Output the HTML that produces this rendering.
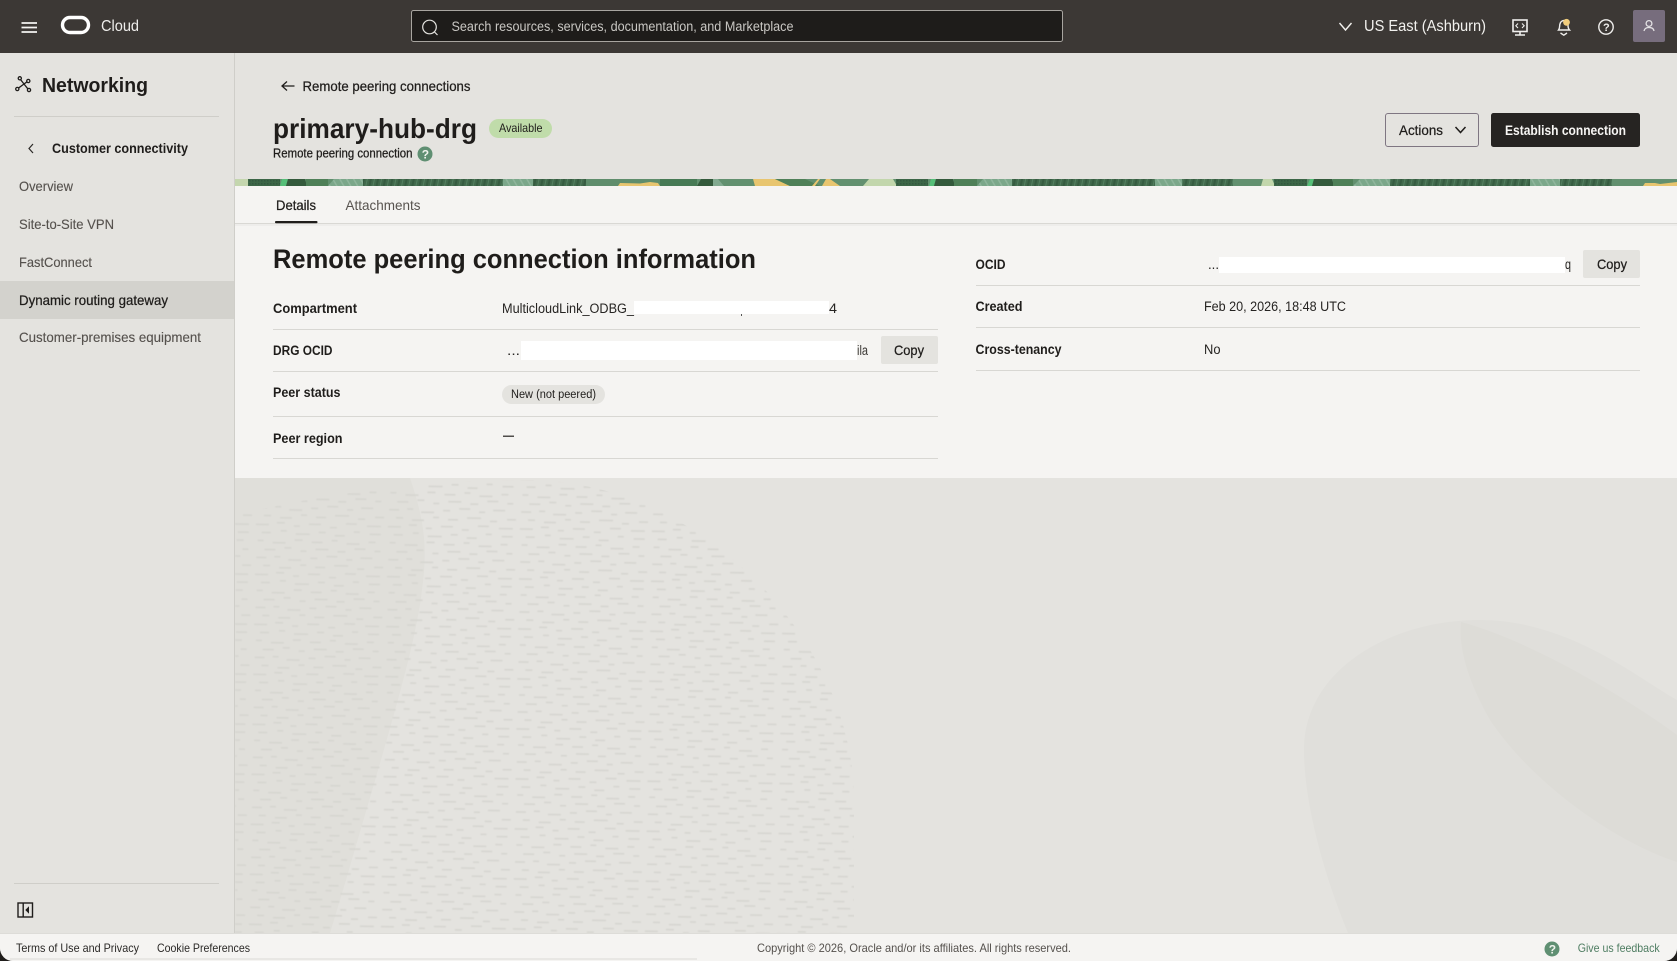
<!DOCTYPE html>
<html lang="en">
<head>
<meta charset="utf-8">
<title>primary-hub-drg</title>
<style>
html,body{margin:0;padding:0;width:1677px;height:961px;overflow:hidden;background:#e4e3df}
svg{display:block}
text{font-family:"Liberation Sans",sans-serif;font-size:14px;fill:#1f1d1b}
.b{font-weight:700}
.m{stroke:#1f1d1b;stroke-width:.25}
.nav{fill:#55514d;stroke:#55514d;stroke-width:.12}
.lab{font-weight:700;font-size:13.5px}
.val{font-size:13.5px;fill:#262422}
.ft{font-size:12px;fill:#2b2927}
</style>
</head>
<body>
<svg width="1677" height="961" viewBox="0 0 1677 961" xmlns="http://www.w3.org/2000/svg">
<defs>
<pattern id="dash" width="132" height="50" patternUnits="userSpaceOnUse" patternTransform="rotate(1)">
<g fill="#d6d5d0">
<rect x="2" y="2" width="10" height="1.6"/><rect x="20" y="1" width="6" height="1.6"/><rect x="34" y="4" width="13" height="1.6"/><rect x="56" y="2" width="7" height="1.6"/><rect x="72" y="0" width="11" height="1.6"/><rect x="92" y="3" width="6" height="1.6"/><rect x="106" y="1" width="12" height="1.6"/>
<rect x="9" y="10" width="7" height="1.6"/><rect x="25" y="12" width="12" height="1.6"/><rect x="46" y="9" width="6" height="1.6"/><rect x="61" y="11" width="10" height="1.6"/><rect x="80" y="9" width="14" height="1.6"/><rect x="103" y="12" width="7" height="1.6"/><rect x="120" y="10" width="9" height="1.6"/>
<rect x="1" y="19" width="13" height="1.6"/><rect x="22" y="17" width="8" height="1.6"/><rect x="39" y="20" width="6" height="1.6"/><rect x="54" y="18" width="12" height="1.6"/><rect x="75" y="21" width="7" height="1.6"/><rect x="91" y="17" width="11" height="1.6"/><rect x="112" y="19" width="14" height="1.6"/>
<rect x="7" y="27" width="9" height="1.6"/><rect x="26" y="25" width="6" height="1.6"/><rect x="41" y="28" width="14" height="1.6"/><rect x="64" y="26" width="7" height="1.6"/><rect x="80" y="29" width="10" height="1.6"/><rect x="99" y="25" width="6" height="1.6"/><rect x="115" y="27" width="11" height="1.6"/>
<rect x="3" y="35" width="6" height="1.6"/><rect x="18" y="37" width="13" height="1.6"/><rect x="40" y="34" width="8" height="1.6"/><rect x="57" y="36" width="11" height="1.6"/><rect x="77" y="34" width="6" height="1.6"/><rect x="92" y="37" width="13" height="1.6"/><rect x="114" y="35" width="7" height="1.6"/>
<rect x="10" y="44" width="11" height="1.6"/><rect x="30" y="42" width="7" height="1.6"/><rect x="46" y="45" width="6" height="1.6"/><rect x="61" y="43" width="13" height="1.6"/><rect x="83" y="45" width="8" height="1.6"/><rect x="100" y="42" width="11" height="1.6"/><rect x="120" y="44" width="6" height="1.6"/>
</g>
</pattern>
<pattern id="fp" width="7" height="7" patternUnits="userSpaceOnUse" patternTransform="rotate(12)">
<rect width="7" height="7" fill="#41694c"/>
<rect x="0" width="2" height="7" fill="#365c41"/>
<rect x="4" width="1" height="7" fill="#537f60"/>
</pattern>
<pattern id="hatch" width="3" height="3" patternUnits="userSpaceOnUse">
<rect width="3" height="3" fill="#3c6647"/>
<rect width="1.5" height="1.5" fill="#335840"/>
</pattern>
<pattern id="lfp" width="6" height="7" patternUnits="userSpaceOnUse" patternTransform="rotate(-30)">
<rect width="6" height="7" fill="#7ba78a"/>
<rect width="1.5" height="7" fill="#8fb59c"/>
</pattern>
<clipPath id="dots"><path d="M235,516 C300,497 420,480 528,480 C700,480 854,640 854,800 L854,933 L235,933Z"/></clipPath>
<filter id="soft" x="0" y="0" width="100%" height="100%"><feGaussianBlur stdDeviation="0.5"/></filter>
</defs>

<!-- page background -->
<rect width="1677" height="961" fill="#e4e3df"/>

<!-- decorative background -->
<path d="M235,478 H410 C424,520 428,545 422,590 C415,650 385,745 346,880 L330,933 H235Z" fill="#e0dfda"/>
<g clip-path="url(#dots)"><rect x="235" y="478" width="640" height="455" fill="url(#dash)" filter="url(#soft)"/></g>
<path d="M1348,933 C1322,870 1304,800 1304,750 C1304,670 1390,620 1480,620 C1570,620 1640,680 1677,700 V933Z" fill="#e0dfdb"/>
<path d="M1461,622 C1530,640 1630,700 1677,735 V862 C1610,840 1530,780 1490,720 C1470,685 1458,650 1461,622Z" fill="#dddcd7"/>

<!-- sidebar -->
<rect x="0" y="53" width="234" height="880" fill="#e4e3df"/>
<rect x="234" y="53" width="1" height="880" fill="#cfcec9"/>
<g fill="none" stroke="#1f1d1b" stroke-width="1.3">
<path d="M20.5,79.5 L24,84 L27,81.8 M24,84 L18.3,88.2 M24,84 L27.8,88.8"/>
<circle cx="19.8" cy="78.3" r="1.6"/><circle cx="28.3" cy="81" r="1.6"/><circle cx="17.3" cy="89" r="1.6"/><circle cx="29" cy="90" r="1.6"/>
</g>
<text x="42" y="92" class="b" font-size="20" style="font-size:20px" textLength="106" lengthAdjust="spacingAndGlyphs">Networking</text>
<rect x="14" y="116" width="205" height="1" fill="#cfcec9"/>
<path d="M33,144 L29,148.5 L33,153" fill="none" stroke="#2b2927" stroke-width="1.2"/>
<text x="52" y="153" class="b" textLength="136" lengthAdjust="spacingAndGlyphs">Customer connectivity</text>
<text x="19" y="191" class="nav" textLength="54" lengthAdjust="spacingAndGlyphs">Overview</text>
<text x="19" y="229" class="nav" textLength="95" lengthAdjust="spacingAndGlyphs">Site-to-Site VPN</text>
<text x="19" y="267" class="nav" textLength="73" lengthAdjust="spacingAndGlyphs">FastConnect</text>
<rect x="0" y="281" width="234" height="38" fill="#d3d2cd"/>
<text x="19" y="305" class="m" textLength="149" lengthAdjust="spacingAndGlyphs">Dynamic routing gateway</text>
<text x="19" y="342" class="nav" textLength="182" lengthAdjust="spacingAndGlyphs">Customer-premises equipment</text>
<rect x="14" y="883" width="205" height="1" fill="#cfcec9"/>
<rect x="18" y="903" width="14.5" height="14" fill="none" stroke="#1f1d1b" stroke-width="1.4"/>
<rect x="22.5" y="903" width="1.4" height="14" fill="#1f1d1b"/>
<path d="M28.5,907.5 L26,910 L28.5,912.5Z" fill="#1f1d1b" stroke="#1f1d1b"/>

<!-- header -->
<rect x="0" y="0" width="1677" height="53" fill="#3c3835"/>
<g stroke="#f4f3f1" stroke-width="1.7"><path d="M21.5,23 H37 M21.5,27.5 H37 M21.5,32 H37"/></g>
<rect x="62.5" y="17.5" width="26" height="15" rx="7.5" fill="none" stroke="#fff" stroke-width="3.4"/>
<text x="101" y="31" style="font-size:15.5px;fill:#efeeec" textLength="38" lengthAdjust="spacingAndGlyphs">Cloud</text>
<rect x="411.5" y="10.5" width="651" height="31" rx="2" fill="#1e1c1a" stroke="#a8a5a0"/>
<circle cx="429.5" cy="27" r="6.8" fill="none" stroke="#e4e3df" stroke-width="1.2"/>
<path d="M434.5,32 L437.5,35" stroke="#e4e3df" stroke-width="1.2"/>
<text x="451.5" y="31" style="font-size:13.5px;fill:#c9c7c3" textLength="342" lengthAdjust="spacingAndGlyphs">Search resources, services, documentation, and Marketplace</text>
<path d="M1339.5,23 L1345.5,30 L1351.5,23" fill="none" stroke="#f2f1ee" stroke-width="1.4"/>
<text x="1364" y="31" style="font-size:16px;fill:#f2f1ee" textLength="122" lengthAdjust="spacingAndGlyphs">US East (Ashburn)</text>
<!-- monitor icon -->
<g fill="none" stroke="#f0efed" stroke-width="1.6">
<rect x="1513" y="20" width="14" height="11.5"/>
<path d="M1520,31.5 V35 M1515,35 H1525"/>
</g>
<g fill="none" stroke="#f0efed" stroke-width="1.1"><path d="M1518,23.5 L1515.8,25.8 L1518,28 M1522,23.5 L1524.2,25.8 L1522,28"/></g>
<!-- bell icon -->
<g fill="none" stroke="#f0efed" stroke-width="1.4">
<path d="M1558.5,30 C1560,28 1559.5,26 1559.8,24.5 C1560.3,22 1562,20.5 1564,20.5 C1566.5,20.5 1568,22.5 1568,25 C1568,27 1568,28.5 1569.5,30 Z"/>
<path d="M1560.5,33 L1563.8,35.2 L1567,33"/>
</g>
<circle cx="1566.5" cy="22.3" r="3.4" fill="#f1cd7c"/>
<!-- help icon -->
<circle cx="1606" cy="27" r="7.2" fill="none" stroke="#f0efed" stroke-width="1.4"/>
<text x="1603" y="31" class="b" style="font-size:11px;fill:#f0efed">?</text>
<!-- avatar -->
<rect x="1633" y="10" width="32" height="32" rx="2" fill="#776d7d"/>
<circle cx="1649" cy="23.5" r="2.9" fill="none" stroke="#e4e2e4" stroke-width="1.3"/>
<path d="M1644,31 C1644.5,28.5 1646.5,27.5 1649,27.5 C1651.5,27.5 1653.5,28.5 1654,31" fill="none" stroke="#e4e2e4" stroke-width="1.3"/>

<!-- page head -->
<path d="M294.5,86 H282 M287,81.5 L282,86 L287,90.5" fill="none" stroke="#1f1d1b" stroke-width="1.3"/>
<text x="302.5" y="91" class="m" textLength="168" lengthAdjust="spacingAndGlyphs">Remote peering connections</text>
<text x="273" y="138" class="b" style="font-size:28px" textLength="204" lengthAdjust="spacingAndGlyphs">primary-hub-drg</text>
<rect x="489" y="119" width="63" height="19" rx="9.5" fill="#c0dcaa"/>
<text x="499" y="132" style="font-size:12px" textLength="43.5" lengthAdjust="spacingAndGlyphs">Available</text>
<text x="273" y="157.5" class="m" style="font-size:12.5px" textLength="139.5" lengthAdjust="spacingAndGlyphs">Remote peering connection</text>
<circle cx="425" cy="154" r="7.5" fill="#5f8f72"/>
<text x="421.7" y="158.5" class="b" style="font-size:12px;fill:#eef2ec">?</text>
<rect x="1385.5" y="113.5" width="93" height="33" rx="2.5" fill="none" stroke="#7f7682"/>
<text x="1399" y="135" class="m" textLength="44" lengthAdjust="spacingAndGlyphs">Actions</text>
<path d="M1455.5,127 L1460.5,132.5 L1465.5,127" fill="none" stroke="#1f1d1b" stroke-width="1.5"/>
<rect x="1491" y="113" width="149" height="34" rx="2.5" fill="#262422"/>
<text x="1505" y="135" class="b" style="fill:#f7f6f4" textLength="121" lengthAdjust="spacingAndGlyphs">Establish connection</text>

<!-- banner -->
<g>
<rect x="235" y="179" width="1442" height="7" fill="#62906f"/>
<rect x="235" y="179" width="13" height="7" fill="#c4d6ae"/>
<rect x="248" y="179" width="32" height="7" fill="url(#hatch)"/>
<polygon points="282,179 288,179 286,186 280,186" fill="#55bf78"/>
<polygon points="288,179 305,179 307,186 286,186" fill="#345a3c"/>
<rect x="306" y="179" width="22" height="7" fill="#4f8058"/>
<polygon points="334,179 363,179 363,186 328,186" fill="url(#lfp)"/>
<rect x="363" y="179" width="223" height="7" fill="url(#fp)"/>
<rect x="503" y="179" width="30" height="7" fill="url(#lfp)"/>
<rect x="586" y="179" width="110" height="7" fill="#5f8d6c"/>
<path d="M618,186 L620,183 L640,183.5 L650,182 L658,183 L660,186Z" fill="#e8c56f"/>
<rect x="660" y="179" width="37" height="7" fill="#477a55"/>
<polygon points="701,179 713,179 713,186 697,186" fill="#345a3c"/>
<polygon points="713,179 718,179 724,186 713,186" fill="#82aa90"/>
<polygon points="753,179 775,179 790,186 755,186" fill="#e8c56f"/>
<polygon points="775,179 805,179 820,186 790,186" fill="#4f8058"/>
<polygon points="818,179 820,179 815,186 812,186" fill="#e8c56f"/>
<polygon points="826,179 830,179 840,186 822,186" fill="#e8c56f"/>
<polygon points="869,179 893,179 897,186 863,186" fill="#c2d6ac"/>
<rect x="896" y="179" width="32" height="7" fill="url(#hatch)"/>
<polygon points="931,179 936,179 934,186 929,186" fill="#55bf78"/>
<polygon points="936,179 953,179 955,186 934,186" fill="#345a3c"/>
<rect x="954" y="179" width="23" height="7" fill="#4f8058"/>
<polygon points="983,179 1012,179 1012,186 977,186" fill="url(#lfp)"/>
<rect x="1012" y="179" width="221" height="7" fill="url(#fp)"/>
<rect x="1155" y="179" width="27" height="7" fill="url(#lfp)"/>
<polygon points="1263,179 1272,179 1275,186 1261,186" fill="#c2d6ac"/>
<rect x="1274" y="179" width="33" height="7" fill="url(#hatch)"/>
<polygon points="1310,179 1314,179 1312,186 1307,186" fill="#55bf78"/>
<polygon points="1314,179 1332,179 1334,186 1312,186" fill="#345a3c"/>
<rect x="1333" y="179" width="20" height="7" fill="#4f8058"/>
<polygon points="1360,179 1390,179 1390,186 1353,186" fill="url(#lfp)"/>
<rect x="1390" y="179" width="222" height="7" fill="url(#fp)"/>
<rect x="1530" y="179" width="30" height="7" fill="url(#lfp)"/>
<path d="M1643,186 L1645,183 L1655,183 L1660,184 L1677,182 V186Z" fill="#e8c56f"/>
</g>

<!-- tabs + details panel -->
<rect x="235" y="186" width="1442" height="292" fill="#f5f4f2"/>
<rect x="235" y="223" width="1442" height="1" fill="#d9d8d4"/>
<rect x="235" y="224" width="1442" height="2" fill="#eeedeb"/>
<text x="276" y="210" class="m" textLength="40" lengthAdjust="spacingAndGlyphs">Details</text>
<text x="345.5" y="210" style="fill:#57534f" textLength="75" lengthAdjust="spacingAndGlyphs">Attachments</text>
<rect x="275" y="221" width="42.5" height="2.2" rx="1" fill="#1f1d1b"/>

<text x="273" y="268" class="b" style="font-size:27px" textLength="483" lengthAdjust="spacingAndGlyphs">Remote peering connection information</text>

<!-- left column -->
<text x="273" y="313" class="lab" textLength="84" lengthAdjust="spacingAndGlyphs">Compartment</text>
<text x="502" y="313" class="val" textLength="132" lengthAdjust="spacingAndGlyphs">MulticloudLink_ODBG_</text>
<rect x="634" y="301" width="195" height="13" fill="#fff"/>
<rect x="741" y="314" width="1" height="2" fill="#555"/>
<text x="829" y="313" class="val" textLength="8" lengthAdjust="spacingAndGlyphs">4</text>
<rect x="273" y="329" width="665" height="1" fill="#d8d7d3"/>

<text x="273" y="355" class="lab" textLength="59.5" lengthAdjust="spacingAndGlyphs">DRG OCID</text>
<text x="507" y="355" class="val" textLength="13" lengthAdjust="spacingAndGlyphs">...</text>
<rect x="521" y="341" width="336" height="19" fill="#fff"/>
<text x="857" y="355" class="val" style="fill:#3a3734" textLength="11" lengthAdjust="spacingAndGlyphs">ila</text>
<rect x="881" y="336" width="57" height="28" rx="2" fill="#e4e3df"/>
<text x="894" y="355" class="m" textLength="30" lengthAdjust="spacingAndGlyphs">Copy</text>
<rect x="273" y="371" width="665" height="1" fill="#d8d7d3"/>

<text x="273" y="397" class="lab" textLength="67.5" lengthAdjust="spacingAndGlyphs">Peer status</text>
<rect x="502" y="385" width="103" height="19" rx="9.5" fill="#e4e3df"/>
<text x="511" y="398" style="font-size:11.5px" textLength="85" lengthAdjust="spacingAndGlyphs">New (not peered)</text>
<rect x="273" y="416" width="665" height="1" fill="#d8d7d3"/>

<text x="273" y="443" class="lab" textLength="69.5" lengthAdjust="spacingAndGlyphs">Peer region</text>
<rect x="503" y="435.6" width="11" height="1.2" fill="#262422"/>
<rect x="273" y="458" width="665" height="1" fill="#d8d7d3"/>

<!-- right column -->
<text x="975.5" y="269" class="lab" textLength="30" lengthAdjust="spacingAndGlyphs">OCID</text>
<text x="1208" y="269" class="val" textLength="11" lengthAdjust="spacingAndGlyphs">...</text>
<rect x="1219" y="257" width="346" height="16" fill="#fff"/>
<text x="1565" y="269" class="val" textLength="6" lengthAdjust="spacingAndGlyphs">q</text>
<rect x="1583" y="250" width="57" height="28" rx="2" fill="#e4e3df"/>
<text x="1597" y="269" class="m" textLength="30" lengthAdjust="spacingAndGlyphs">Copy</text>
<rect x="976" y="285" width="664" height="1" fill="#d8d7d3"/>

<text x="975.5" y="311" class="lab" textLength="47" lengthAdjust="spacingAndGlyphs">Created</text>
<text x="1204" y="311" class="val" textLength="142" lengthAdjust="spacingAndGlyphs">Feb 20, 2026, 18:48 UTC</text>
<rect x="976" y="327" width="664" height="1" fill="#d8d7d3"/>

<text x="975.5" y="354" class="lab" textLength="86" lengthAdjust="spacingAndGlyphs">Cross-tenancy</text>
<text x="1204" y="354" class="val" textLength="16.5" lengthAdjust="spacingAndGlyphs">No</text>
<rect x="976" y="370" width="664" height="1" fill="#d8d7d3"/>

<!-- footer -->
<path d="M0,961 H1677 V948 A13,13 0 0 1 1664,961 H13 A13,13 0 0 1 0,948Z" fill="#1f1d1b"/>
<path d="M0,933 H1677 V948 A13,13 0 0 1 1664,961 H13 A13,13 0 0 1 0,948Z" fill="#f5f4f2"/>
<rect x="0" y="933" width="1677" height="1" fill="#dddcd8"/>
<rect x="10" y="958" width="687" height="2" fill="#e8e7e4"/>
<text x="16" y="952" class="ft" textLength="123" lengthAdjust="spacingAndGlyphs">Terms of Use and Privacy</text>
<text x="157" y="952" class="ft" textLength="93" lengthAdjust="spacingAndGlyphs">Cookie Preferences</text>
<text x="757" y="952" class="ft" style="fill:#55514d" textLength="314" lengthAdjust="spacingAndGlyphs">Copyright © 2026, Oracle and/or its affiliates. All rights reserved.</text>
<circle cx="1552" cy="949" r="7.5" fill="#5f8f72"/>
<text x="1548.7" y="953.5" class="b" style="font-size:12px;fill:#eef2ec">?</text>
<text x="1577.7" y="952" class="ft" style="fill:#4f7d62" textLength="82" lengthAdjust="spacingAndGlyphs">Give us feedback</text>
</svg>
</body>
</html>
